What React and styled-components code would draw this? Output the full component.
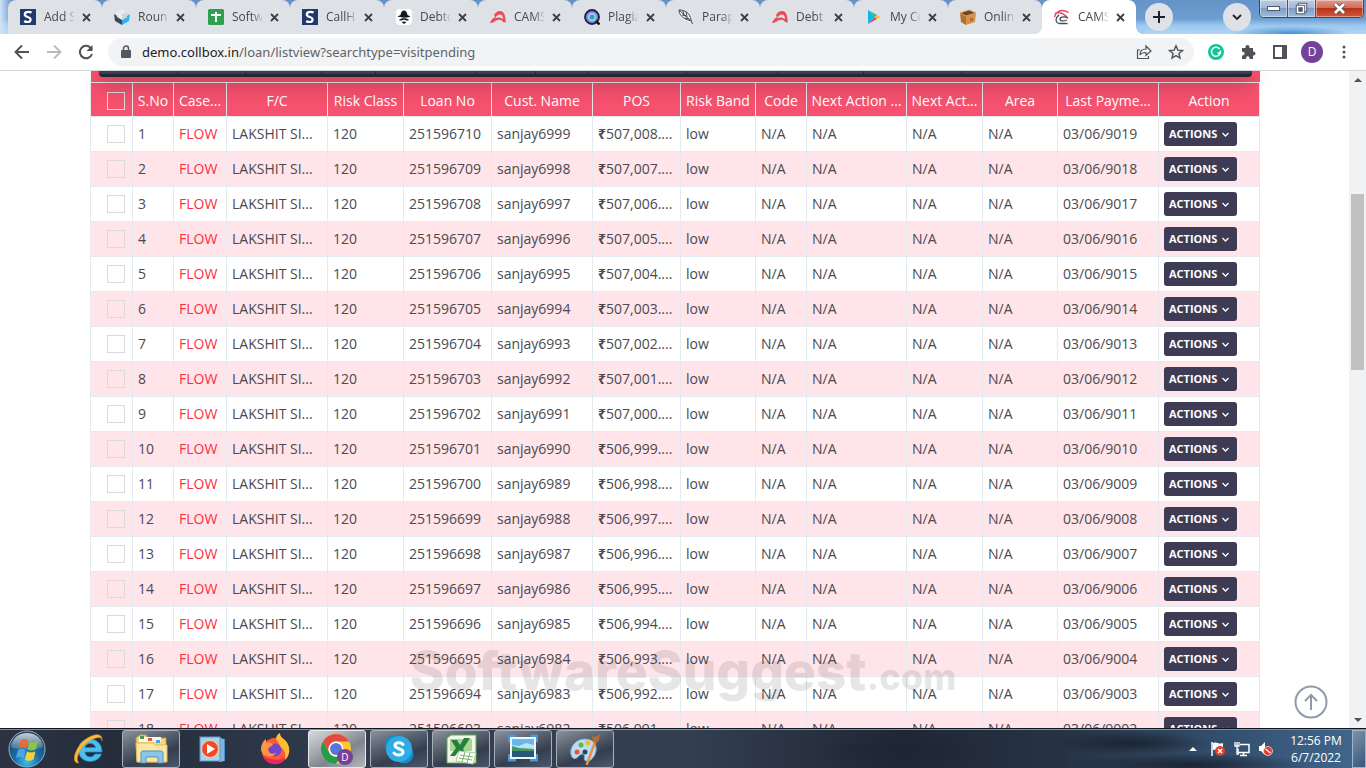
import React from 'react';
import styled, { createGlobalStyle, css } from 'styled-components';

const GlobalStyle = createGlobalStyle`
  *, *::before, *::after { box-sizing: border-box; }
  html, body { margin: 0; padding: 0; }
  body { font-family: "Open Sans", "Noto Sans", sans-serif; background: #fff; }
  button, input { font: inherit; margin: 0; padding: 0; }
`;

const Desktop = styled.div`
  display: flex;
  flex-direction: column;
  height: 100vh;
  overflow: hidden;
`;

/* ---------- Browser chrome ---------- */

const TabStrip = styled.header`
  display: flex;
  align-items: flex-start;
  height: 34px;
  flex: none;
  padding: 0 2px 0 8px;
  background:
    radial-gradient(ellipse 60px 8px at calc(100% - 76px) 100%, #3f8fd0 0, #3f8fd000 100%),
    linear-gradient(90deg, #cfe3f7 0, #cfe3f700 12px),
    linear-gradient(#6593c8 0, #6d9dd1 55%, #9cc8f0 75%, #b2d6f5 100%);
`;

const TabList = styled.nav`
  display: flex;
  flex: 0 1 1128px;
  min-width: 0;
`;

const TabBox = styled.div`
  position: relative;
  display: flex;
  align-items: center;
  flex: 1 1 94px;
  min-width: 0;
  height: 34px;
  padding: 0 11px 0 12px;
  border-radius: 8px 8px 0 0;
  background: #dee1e6;
  color: #45484d;
  ${({ $divider }) => $divider && css`
    &::after {
      content: '';
      position: absolute;
      right: -1px;
      top: 8px;
      width: 1px;
      height: 19px;
      background: #80868b;
    }
  `}
  ${({ $active }) => $active && css`
    background: #fff;
    &::before, &::after {
      content: '';
      position: absolute;
      bottom: 0;
      width: 8px;
      height: 8px;
    }
    &::before { left: -8px; background: radial-gradient(circle at 0 0, #dee1e6 8px, #fff 8px); }
    &::after { right: -8px; background: radial-gradient(circle at 100% 0, #a5cdf1 8px, #fff 8px); }
  `}
`;

const TabTitle = styled.a`
  flex: 1;
  min-width: 0;
  margin-left: 8px;
  overflow: hidden;
  white-space: nowrap;
  color: inherit;
  text-decoration: none;
  font-size: 12px;
  line-height: 18px;
  mask-image: linear-gradient(90deg, #000 65%, transparent 105%);
`;

const IconButton = styled.button`
  display: flex;
  align-items: center;
  justify-content: center;
  flex: none;
  width: ${({ $size }) => $size}px;
  height: ${({ $size }) => $size}px;
  border: 0;
  border-radius: 50%;
  color: #4f5358;
  background: ${({ $fill }) => $fill || 'transparent'};
`;

const TabClose = styled(IconButton)`
  margin-left: 8px;
  color: #3c4043;
`;

const StripButton = styled(IconButton)`
  margin: 3px 0 0 ${({ $gap }) => $gap || 0}px;
  color: #202124;
`;

const WindowControls = styled.div`
  display: flex;
  height: 18px;
  margin-left: 8px;
  border: 1px solid #33496b;
  border-top: 0;
  border-radius: 0 0 5px 5px;
  overflow: hidden;
`;

const WindowButton = styled.button`
  display: flex;
  align-items: center;
  justify-content: center;
  width: ${({ $close }) => ($close ? 47 : 28)}px;
  border: 0;
  border-right: ${({ $close }) => ($close ? '0' : '1px solid #3f5573')};
  box-shadow: inset 0 0 0 1px #ffffff66;
  background: ${({ $close }) =>
    $close
      ? 'linear-gradient(#dd9a8c 0, #cf6f5a 45%, #b8321a 50%, #d3583a 100%)'
      : 'linear-gradient(#bccde2 0, #a3b9d5 45%, #7f9cc2 50%, #a0bcdd 100%)'};
`;

const Spacer = styled.div`flex: 1;`;

const Toolbar = styled.div`
  display: flex;
  align-items: center;
  flex: none;
  height: 37px;
  padding: 0 10px 1px 10px;
  gap: 8px;
  border-bottom: 1px solid #d5d7da;
  background: #fff;
`;

const AddressBar = styled.form`
  display: flex;
  align-items: center;
  flex: 1;
  min-width: 0;
  height: 28px;
  margin: 0 2px;
  padding: 0 6px 0 12px;
  border-radius: 14px;
  background: #f1f3f4;
  gap: 8px;
`;

const Address = styled.div`
  flex: 1;
  min-width: 0;
  padding-left: 2px;
  font-family: "Noto Sans", "Open Sans", sans-serif;
  font-size: 13px;
  line-height: 20px;
  color: #5f6368;
  white-space: nowrap;
  overflow: hidden;
`;

const Host = styled.span`color: #202124;`;

const Avatar = styled.button`
  width: 22px;
  height: 22px;
  margin: 0 1px;
  border: 0;
  border-radius: 50%;
  background: #75429b;
  color: #fff;
  font-size: 12px;
  line-height: 22px;
`;

/* ---------- Page ---------- */

const Viewport = styled.div`
  position: relative;
  display: flex;
  flex: 1;
  min-height: 0;
  background: #fff;
`;

const Page = styled.main`
  flex: 1;
  min-width: 0;
  padding: 0 89px 0 90px;
  overflow: hidden;
`;

const StickyStrip = styled.div`
  height: 11px;
  margin-left: 1px;
  padding: 0 8px;
  background: #f6516e;
`;

const MenuBar = styled.div`
  position: relative;
  z-index: 1;
  display: flex;
  height: 6px;
  border-radius: 0 0 4px 4px;
  border-bottom: 3px solid #222736;
  background: #3e3b55;
  box-shadow: 0 5px 20px rgba(0, 0, 0, 0.5);
`;

const MenuSlot = styled.span`
  flex: ${({ $grow }) => $grow} 1 0;
  border-right: 1px solid #222736;
  &:last-child { border-right: 0; }
`;

const Grid = styled.table`
  width: 100%;
  table-layout: fixed;
  border-collapse: separate;
  border-spacing: 0;
  font-size: 14px;
  line-height: 20px;
  color: #4a4a50;
`;

const HeadCell = styled.th`
  height: 35px;
  padding: 2px 4px 0;
  border: 1px solid #e4e9ee;
  border-left-width: 0;
  background: #f6516e;
  color: #fff;
  font-weight: 500;
  text-align: ${({ $left }) => ($left ? 'left' : 'center')};
  white-space: nowrap;
  &:first-child { padding-left: 16px; border-left-width: 1px; }
`;

const Row = styled.tr`
  background: #fff;
  &:nth-child(even) { background: #ffe4e9; }
`;

const Cell = styled.td`
  height: 35px;
  padding: 0 0 0 5px;
  border: solid #e3eaf0;
  border-width: 0 1px 1px 0;
  white-space: nowrap;
  overflow: hidden;
  color: ${({ $alert }) => ($alert ? '#fb2f3d' : 'inherit')};
  &:first-child { padding-left: 16px; border-left-width: 1px; }
`;

const Rupee = styled.span`font-weight: 700;`;

const Tick = styled.input`
  display: block;
  appearance: none;
  width: 18px;
  height: 18px;
  border: 1px solid #d9dadc;
  background: transparent;
`;

const ActionsButton = styled.button`
  display: flex;
  align-items: center;
  justify-content: space-between;
  width: 73px;
  height: 24px;
  padding: 0 8px 0 5px;
  border: 0;
  border-radius: 3px;
  background: #3e3b55;
  color: #fff;
  font-size: 11px;
  font-weight: 700;
  line-height: 16px;
`;

const Watermark = styled.div`
  position: absolute;
  left: 0;
  right: 0;
  bottom: 21px;
  text-align: center;
  font-family: Inter, sans-serif;
  font-size: 53px;
  font-weight: 800;
  line-height: 60px;
  color: rgba(60, 60, 60, 0.13);
  pointer-events: none;
`;

const WatermarkSuffix = styled.span`font-size: 36px;`;

const BackToTop = styled.a`
  position: absolute;
  right: 38px;
  bottom: 9px;
  display: flex;
  color: #9299a8;
`;

const ScrollTrack = styled.div`
  display: flex;
  flex-direction: column;
  align-items: center;
  flex: none;
  width: 17px;
  background: #f1f2f3;
`;

const ScrollArrow = styled.button`
  display: flex;
  align-items: center;
  justify-content: center;
  width: 17px;
  height: 17px;
  border: 0;
  background: transparent;
`;

const ScrollLane = styled.div`
  display: flex;
  flex-direction: column;
  flex: 1;
  width: 13px;
`;

const ScrollGap = styled.div`flex: ${({ $grow }) => $grow};`;
const ScrollThumb = styled.div`
  flex: 176;
  background: #c1c1c1;
`;

/* ---------- Taskbar ---------- */

const Taskbar = styled.footer`
  display: flex;
  align-items: center;
  flex: none;
  height: 40px;
  border-top: 1px solid #10151f;
  box-shadow: inset 0 1px 0 #8090a4;
  background:
    radial-gradient(ellipse 90px 14px at 900px 22px, #1f2633 0, #1f263300 100%),
    radial-gradient(ellipse 80px 12px at 1130px 14px, #1b2432 0, #1b243200 100%),
    radial-gradient(ellipse 120px 12px at 1190px 36px, #1b2432 0, #1b243200 100%),
    linear-gradient(90deg, #2c3443 0, #252d3b 8%, #333f52 30%, #343f51 50%, #1f2734 66%, #273345 78%, #33506f 90%, #41688f 100%);
`;

const StartButton = styled.button`
  display: flex;
  margin: 0 14px 0 8px;
  border: 0;
  background: transparent;
`;

const TaskList = styled.nav`
  display: flex;
  gap: 4px;
`;

const TaskButton = styled.button`
  display: flex;
  align-items: center;
  justify-content: center;
  width: 58px;
  height: 38px;
  border: 1px solid transparent;
  border-radius: 3px;
  background: transparent;
  ${({ $open }) => $open && css`
    border-color: #a9afb9;
    background: linear-gradient(160deg, #8b929e 0, #596270 35%, #343e4f 65%, #4c586b 100%);
  `}
  ${({ $current }) => $current && css`
    border-color: #e8eaec;
    background: linear-gradient(150deg, #d7d9dc 0, #a7abb1 35%, #7f858e 60%, #b4b8bd 100%);
  `}
`;

const Tray = styled.div`
  display: flex;
  align-items: center;
  gap: 8px;
`;

const Clock = styled.time`
  width: 68px;
  padding-top: 1px;
  color: #fff;
  font-size: 12px;
  line-height: 17px;
  text-align: center;
  white-space: nowrap;
`;

const ShowDesktop = styled.button`
  width: 14px;
  height: 38px;
  margin-left: -6px;
  border: 1px solid #9fb4c9;
  background: linear-gradient(135deg, #7d93ab, #38577a);
`;

/* ---------- Icons ---------- */

const Svg = ({ s = 16, w, h, box, children, ...rest }) => (
  <svg width={w || s} height={h || s} viewBox={box || `0 0 ${w || s} ${h || s}`} fill="none" aria-hidden="true" {...rest}>
    {children}
  </svg>
);

const FavS = () => (
  <Svg>
    <rect width="16" height="16" fill="#223a6b" />
    <path d="M11.6 3.6C10.6 3 9.3 2.7 8 2.8c-2 0-3.2 1.1-3.2 2.6 0 3.2 5.8 2 5.8 5 0 1.6-1.4 2.6-3.1 2.6-1.200 0-2.500-.4-3.300-1" stroke="#fff" strokeWidth="2.200" />
  </Svg>
);
const FavCube = () => (
  <Svg>
    <path d="M0 5l8 5v6l-7-4z" fill="#3b4856" />
    <path d="M16 5l-8 5v6l7-4z" fill="#29b6f6" />
    <path d="M3 3l5-3 5 3v5L8 11 3 8z" fill="#e9ebee" />
    <path d="M8 5l5-2v5l-5 3z" fill="#cfd3d8" />
  </Svg>
);
const FavSheet = () => (
  <Svg>
    <rect width="16" height="16" rx="1.500" fill="#2e9e50" />
    <path d="M3 6h10M8 3v10" stroke="#fff" strokeWidth="2" />
  </Svg>
);
const FavSpy = () => (
  <Svg>
    <rect width="16" height="16" rx="4" fill="#fff" />
    <path d="M4.500 6C5 3 6.200 1.500 8 1.500S11 3 11.500 6l3 1.500c-3 1.600-10 1.600-13 0z" fill="#15181c" />
    <path d="M3 11c2-2.500 8-2.500 10 0-1.500.8-3 .8-5-.4C6 11.800 4.500 11.800 3 11zM5.500 13c2-.8 3-.8 5 0L8 15z" fill="#15181c" />
  </Svg>
);
const FavArch = () => (
  <Svg>
    <path d="M0 14C1 11 3 9 5 8L4 6C6 2.500 8 2 10 2c4 0 5.500 4 5.800 11.500L13 13c-1-2-3-2.500-5.500-2C5 11.500 4 14 0 14zM5 9.500c3-1.500 5.500-1.300 8 .8 0-3.300-1-4.800-3-4.800S6.500 6.500 5 9.500z" fill="#ee4a58" fillRule="evenodd" />
  </Svg>
);
const FavPlag = () => (
  <Svg>
    <circle cx="8" cy="8" r="7" fill="#7a83e8" stroke="#1f2340" strokeWidth="1.800" />
    <circle cx="8" cy="8" r="4.200" fill="#b9c3ff" />
    <circle cx="8" cy="8" r="2.500" fill="#17b890" />
    <path d="M12 12l3.500 3.500" stroke="#111" strokeWidth="2.500" />
  </Svg>
);
const FavQuill = () => (
  <Svg>
    <path d="M1 1c6 0 11 3 12 10l1.500 4C12 13 10 13 8 12 3 10 1 6 1 1z" fill="#f3f4f5" />
    <path d="M1 1c6 0 11 3 12 10l1.500 4M1 1c0 5 4 9 12 11M1 1l11 10M5 2l1 4M8 3l1 5M4 6l4 1M7 9l4 1" stroke="#34373b" strokeWidth=".900" />
  </Svg>
);
const FavPlay = () => (
  <Svg>
    <path d="M2 1v14l7-7z" fill="#12b5e8" />
    <path d="M2 1l9 5-2 2z" fill="#17c2a0" />
    <path d="M2 15l9-5-2-2z" fill="#ee3e4b" />
    <path d="M11 6l4 2-4 2-2-2z" fill="#fcc31e" />
  </Svg>
);
const FavBox = () => (
  <Svg>
    <path d="M0 4l6 3v9l-5-3z" fill="#b5702f" />
    <path d="M6 7l10-3-1 9-9 3z" fill="#d3934f" />
    <path d="M0 4l9-3 7 3-10 3z" fill="#6e4520" />
    <path d="M0 4l9-3 7 3-10 3z" stroke="#d9a05e" />
    <path d="M10 9.500l3-1v3l-3 1z" fill="#a76a30" />
  </Svg>
);
const FavCams = () => (
  <Svg>
    <path d="M.5 8C2 2 8-.5 14.500 3.500M1 4.500c5-2 9 0 13 5" stroke="#e2485a" strokeWidth="1.400" />
    <path d="M5 6C1 9 1 14 6 14.500h7.500M13.500 8.500C9 7 5.500 8.500 6 10.500s4 1.500 7 .5" stroke="#454c59" strokeWidth="1.300" />
  </Svg>
);

const Cross = () => (
  <Svg s={9}><path d="M1 1l7 7M8 1L1 8" stroke="currentColor" strokeWidth="1.800" /></Svg>
);

const ActionChevron = () => (
  <Svg s={7}><path d="M.5 2l3 3 3-3" stroke="#fff" strokeWidth="1.300" /></Svg>
);

const StartOrb = () => (
  <Svg s={38}>
    <defs>
      <radialGradient id="orb" cx=".5" cy=".85" r=".8">
        <stop offset="0" stopColor="#35c3ee" /><stop offset=".45" stopColor="#1c6aa5" /><stop offset="1" stopColor="#23405f" />
      </radialGradient>
      <linearGradient id="orbShine" x2="0" y2="1">
        <stop offset="0" stopColor="#fff" stopOpacity=".75" /><stop offset="1" stopColor="#fff" stopOpacity=".12" />
      </linearGradient>
    </defs>
    <circle cx="19" cy="19" r="18" fill="url(#orb)" stroke="#8fb3cc" />
    <path d="M3 17C4 7 12 3 19 3s15 4 16 14c-8 4-24 4-32 0z" fill="url(#orbShine)" />
    <path d="M13 10c3-1.500 5-1.500 7 .5l-2 8c-2.500-2-5-2-7.500-.5z" fill="#ee6a35" />
    <path d="M21.500 11.500c3 1.500 5.500 1.500 8.500-.5l-2 8c-3 2-6 2-8.500.3z" fill="#8cc63f" />
    <path d="M10 20c3-1.500 5-1.500 7.500.3l-2 8c-2.500-2-5-2-7.500-.3z" fill="#4ea6e6" />
    <path d="M19 21.500c3 1.500 5.500 1.500 8.500-.3l-2 8c-3 2-6 2-8.500.3z" fill="#fbd13b" />
  </Svg>
);

const IeIcon = () => (
  <Svg s={32}>
    <path d="M29 19H12c0 5 7 7 10 2h6.500c-4 11-23 10-23-4C5.500 2 29 2 29 19zM12 14.500h10.500c-1-5.500-9.500-5.500-10.500 0z" fill="#4dbdee" stroke="#1f85c4" strokeWidth=".800" fillRule="evenodd" />
    <path d="M6 30C-3 31 2 14 13 6 20 1 30-1 29 8c0-5-5-4-11-1C8 12 1 26 6 30z" fill="#f8bb3c" stroke="#d9902a" strokeWidth=".500" />
  </Svg>
);
const FolderIcon = () => (
  <Svg s={34}>
    <path d="M2 6l4-3h6l2 3h18v24H3z" fill="#f4d681" stroke="#c39c3c" />
    <path d="M5 5h22v5H5z" fill="#fff8dd" />
    <path d="M6 4h4v3H6z" fill="#3f9b54" /><path d="M14 6h4v3h-4z" fill="#e05a3d" /><path d="M22 8h4v3h-4z" fill="#4aa3dd" />
    <path d="M2 11h17l2 2h12v17H3z" fill="#fae7a3" stroke="#e0bb5c" />
    <path d="M7 31V21q0-2 2-2h18q2 0 2 2v10h-5v-6H12v6z" fill="#8bc5ea" stroke="#4f94c8" />
  </Svg>
);
const WmpIcon = () => (
  <Svg s={28}>
    <path d="M20 3l6 1v22l-6 1z" fill="#4d8fc4" /><path d="M22 3v24M24 4v22" stroke="#b7dbf3" />
    <rect x="1" y="2" width="20" height="24" fill="#a9d2ef" stroke="#5c97c4" />
    <circle cx="11" cy="14" r="8.500" fill="#ee4b25" stroke="#ffd0b8" />
    <path d="M8 9l8 5-8 5z" fill="#fff" />
  </Svg>
);
const FirefoxIcon = () => (
  <Svg s={32}>
    <circle cx="16" cy="18" r="13" fill="#ff5a36" />
    <path d="M4 23c4 11 20 10 24 0-4 5-15 5-24 0z" fill="#ee2360" />
    <path d="M17 5c1-3 2-4 4-5 0 4 3 5 6 8 5 6 4 15-1 19 1-5 0-11-5-13 0-4-3-5-4-9z" fill="#ffbd35" />
    <circle cx="16" cy="17" r="6.500" fill="#7446cf" />
    <path d="M2 17C2 12 4 8 7 6v4c3-1 5 0 7 1-1 3-4 2-5 5 0 4 4 6 8 4-2 5-13 5-15-3z" fill="#ff9640" />
  </Svg>
);
const ChromeIcon = () => (
  <Svg s={34}>
    <circle cx="16" cy="17" r="15" fill="#fbc934" />
    <path d="M3 9.500A15 15 0 0 1 29 9.500H16A7.500 7.500 0 0 0 9.500 21z" fill="#e34b42" />
    <path d="M3 9.500A15 15 0 0 0 16 32l6.500-11A7.500 7.500 0 0 1 9.500 21z" fill="#269b4b" />
    <circle cx="16" cy="17" r="7.500" fill="#fff" /><circle cx="16" cy="17" r="6" fill="#5576dd" />
    <circle cx="25" cy="25" r="8" fill="#7c3f98" />
    <text x="25" y="29" fontSize="10" fill="#fff" textAnchor="middle">D</text>
  </Svg>
);
const SkypeIcon = () => (
  <Svg s={32}>
    <circle cx="12" cy="12" r="10" fill="#168ccb" /><circle cx="21" cy="21" r="9.500" fill="#168ccb" />
    <circle cx="16" cy="16" r="13" fill="#2eace4" />
    <path d="M20 11.500c-2-2.500-8-2.500-8 1s8 3 8 6.500-7 4-9 1" stroke="#fff" strokeWidth="3" strokeLinecap="round" />
  </Svg>
);
const ExcelIcon = () => (
  <Svg s={32}>
    <path d="M2 5l4-3h25v28H2z" fill="#edf6e8" stroke="#5fa951" />
    <path d="M5 6h22v12H5z" fill="#a9d592" />
    <path d="M6 7h6l3 5 4-7h6l-7 11 5 8h-6l-4-5-3 4H5l6-8z" fill="#24803c" />
    <path d="M14 18l17 2-3 11-17-3z" fill="#fff" stroke="#aacda1" />
    <path d="M15 22l13 2M14 25l13 2M20 19l-3 10M25 20l-3 10" stroke="#79b66d" />
  </Svg>
);
const PictureIcon = () => (
  <Svg s={30}>
    <path d="M1 8V2h7M22 2h7v6M1 20v6h7M22 26h7v-6" stroke="#4796d8" strokeWidth="3" />
    <path d="M3 4h24v20H3z" fill="#bfe1f7" stroke="#eff5fa" strokeWidth="2" />
    <path d="M4 5h22v6l-8-2-7 3-7-1z" fill="#68b7eb" />
    <path d="M4 12l7 2 15 1v3H4z" fill="#479666" /><path d="M4 17h22v6H4z" fill="#27577b" />
  </Svg>
);
const PaintIcon = () => (
  <Svg s={32}>
    <path d="M3 24C-1 17 5 6 16 6c8 0 12 5 11 12-1 5-5 11-10 10-4-1 1-7-4-7-3 0-6 8-10 3z" fill="#bcdcf1" stroke="#77a9cf" />
    <circle cx="8" cy="19" r="2.500" fill="#e65448" /><circle cx="12" cy="12" r="2.500" fill="#69b344" /><circle cx="19" cy="10" r="2.500" fill="#f2b928" /><circle cx="16" cy="19" r="2.500" fill="#244769" />
    <path d="M18 31L26 9" stroke="#e89244" strokeWidth="2.500" strokeLinecap="round" />
    <path d="M24 9l-1-6 3 1 5-3-1 6-3 3z" fill="#b66b37" />
  </Svg>
);
const FlagIcon = () => (
  <Svg>
    <path d="M2 1v14" stroke="#fff" strokeWidth="1.500" /><path d="M3 2c4-2 5 2 10 0v7c-5 2-6-1-10 0z" fill="#fff" />
    <circle cx="10" cy="10" r="5" fill="#df3f2c" /><path d="M8 8l4 4M12 8l-4 4" stroke="#fff" strokeWidth="1.500" />
  </Svg>
);
const NetworkIcon = () => (
  <Svg>
    <path d="M6 3.500h9v8H4v-4M9.500 11.500v3M6 14.500h7" stroke="#fff" strokeWidth="1.500" />
    <path d="M1 1v4h4V1M3 1v12h2" stroke="#fff" strokeWidth="1.300" />
  </Svg>
);
const VolumeIcon = () => (
  <Svg>
    <path d="M1 5h2l4-4v13l-4-4H1z" fill="#fff" />
    <circle cx="10" cy="10" r="4.500" fill="#df3f2c" stroke="#f8d7d1" strokeWidth=".800" /><path d="M7.500 8l5 4" stroke="#fff" strokeWidth="1.500" />
  </Svg>
);

/* ---------- Data ---------- */

const tabs = [
  ['Add S', FavS], ['Roun', FavCube], ['Softw', FavSheet], ['CallHi', FavS], ['Debto', FavSpy], ['CAMS', FavArch],
  ['Plagia', FavPlag], ['Parap', FavQuill], ['Debt C', FavArch], ['My Co', FavPlay], ['Onlin', FavBox], ['CAMS', FavCams],
];

const columns = [
  ['S.No', 41], ['Case...', 53], ['F/C', 101], ['Risk Class', 76], ['Loan No', 88], ['Cust. Name', 101], ['POS', 88],
  ['Risk Band', 75], ['Code', 51], ['Next Action ...', 100], ['Next Act...', 76], ['Area', 75], ['Last Payme...', 101], ['Action', 101],
];

const menuSlots = [79, 67, 76, 53, 101, 59, 51, 99, 91, 86, 97, 293];

const loans = Array.from({ length: 18 }, (_, i) => ({
  no: i + 1,
  loan: 251596710 - i,
  name: `sanjay${6999 - i}`,
  pos: `${(507008 - i).toLocaleString('en-US')}....`,
  paid: `03/06/${9019 - i}`,
}));

const tasks = [
  ['Internet Explorer', IeIcon], ['File Explorer', FolderIcon, 'open'], ['Media Player', WmpIcon], ['Firefox', FirefoxIcon],
  ['Chrome', ChromeIcon, 'current'], ['Skype', SkypeIcon, 'open'], ['Excel', ExcelIcon, 'open'],
  ['Picture Viewer', PictureIcon, 'open'], ['Paint', PaintIcon, 'open'],
];

/* ---------- Sections ---------- */

function BrowserTabs() {
  return (
    <TabStrip>
      <TabList aria-label="Tabs">
        {tabs.map(([title, Icon], i) => (
          <TabBox key={i} $active={i === tabs.length - 1} $divider={i < tabs.length - 2}>
            <Icon />
            <TabTitle href="#tab">{title}</TabTitle>
            <TabClose $size={9} aria-label="Close tab"><Cross /></TabClose>
          </TabBox>
        ))}
      </TabList>
      <StripButton $size={28} $gap={9} $fill="#dee1e6" aria-label="New tab">
        <Svg s={12}><path d="M6 0v12M0 6h12" stroke="currentColor" strokeWidth="2" /></Svg>
      </StripButton>
      <Spacer />
      <StripButton $size={28} $fill="#dee1e6" aria-label="Search tabs">
        <Svg s={10}><path d="M1 3l4 4 4-4" stroke="currentColor" strokeWidth="1.800" /></Svg>
      </StripButton>
      <WindowControls>
        <WindowButton aria-label="Minimize">
          <Svg w={13} h={5}><rect x=".5" y=".5" width="12" height="4" fill="#fff" stroke="#4d5b70" /></Svg>
        </WindowButton>
        <WindowButton aria-label="Restore">
          <Svg s={13}>
            <path d="M4.500 2.500h6v6h-6z" stroke="#4d5b70" strokeWidth="3.500" /><path d="M4.500 2.500h6v6h-6z" stroke="#fff" strokeWidth="1.500" />
            <path d="M2.500 4.500h6v6h-6z" fill="#4d5b70" stroke="#4d5b70" strokeWidth="3.500" /><path d="M2.500 4.500h6v6h-6z" stroke="#fff" strokeWidth="1.500" />
          </Svg>
        </WindowButton>
        <WindowButton $close aria-label="Close">
          <Svg w={13} h={11}>
            <path d="M2 1l9 9M11 1l-9 9" stroke="#57454b" strokeWidth="4.500" /><path d="M2 1l9 9M11 1l-9 9" stroke="#fff" strokeWidth="2.800" />
          </Svg>
        </WindowButton>
      </WindowControls>
    </TabStrip>
  );
}

function BrowserToolbar() {
  return (
    <Toolbar>
      <IconButton $size={24} aria-label="Back">
        <Svg><path d="M15 8H2M8 1.500L1.500 8 8 14.500" stroke="currentColor" strokeWidth="1.900" /></Svg>
      </IconButton>
      <IconButton $size={24} aria-label="Forward">
        <Svg><path d="M1 8h13M8 1.500L14.500 8 8 14.500" stroke="#b9bbc2" strokeWidth="1.900" /></Svg>
      </IconButton>
      <IconButton $size={24} aria-label="Reload">
        <Svg><path d="M14 10A6.200 6.200 0 1 1 12.500 3.600L14 5" stroke="currentColor" strokeWidth="2" /><path d="M14.500 1v6h-6z" fill="currentColor" /></Svg>
      </IconButton>
      <AddressBar>
        <Svg w={12} h={14}><rect x="1" y="5" width="10" height="8" rx="1" fill="#54585e" /><path d="M3.500 5V3.500a2.500 2.500 0 0 1 5 0V5" stroke="#54585e" strokeWidth="1.500" /></Svg>
        <Address><Host>demo.collbox.in</Host>/loan/listview?searchtype=visitpending</Address>
        <IconButton $size={24} type="button" aria-label="Share">
          <Svg><path d="M4 6H1.500v8.500h11V12M4 11c0-4 2-6 6-6V2l5 5-5 4.500V8.500C7 8.500 5 9 4 11z" stroke="currentColor" strokeWidth="1.200" /></Svg>
        </IconButton>
        <IconButton $size={24} type="button" aria-label="Bookmark">
          <Svg><path d="M8 1.800l1.800 4.300 4.700.4-3.600 3 1.100 4.600L8 11.600l-4 2.500 1.100-4.600-3.600-3 4.700-.4z" stroke="currentColor" strokeWidth="1.400" /></Svg>
        </IconButton>
      </AddressBar>
      <IconButton $size={24} aria-label="Writing assistant">
        <Svg><circle cx="8" cy="8" r="8" fill="#15c39a" /><path d="M11.500 5A4.500 4.500 0 1 0 12.300 9H9.500M12.500 6.500V9.500" stroke="#fff" strokeWidth="1.400" /></Svg>
      </IconButton>
      <IconButton $size={24} aria-label="Extensions">
        <Svg><path d="M2 4h3.500V3a2 2 0 0 1 4 0v1H13v3.500h.5a2 2 0 0 1 0 4H13V15H9.500v-1a1.700 1.700 0 0 0-3.400 0v1H2v-3.600h.8a1.800 1.800 0 0 0 0-3.600H2z" fill="currentColor" /></Svg>
      </IconButton>
      <IconButton $size={24} aria-label="Side panel">
        <Svg s={14}><path d="M1 1h12v12H1z" stroke="currentColor" strokeWidth="2" /><path d="M9 1h4v12H9z" fill="currentColor" /></Svg>
      </IconButton>
      <Avatar aria-label="Profile">D</Avatar>
      <IconButton $size={24} aria-label="Menu">
        <Svg><circle cx="8" cy="3" r="1.500" fill="currentColor" /><circle cx="8" cy="8" r="1.500" fill="currentColor" /><circle cx="8" cy="13" r="1.500" fill="currentColor" /></Svg>
      </IconButton>
    </Toolbar>
  );
}

function LoanRow({ row }) {
  return (
    <Row>
      <Cell><Tick type="checkbox" aria-label={`Select ${row.no}`} /></Cell>
      <Cell>{row.no}</Cell>
      <Cell $alert>FLOW</Cell>
      <Cell>LAKSHIT SI...</Cell>
      <Cell>120</Cell>
      <Cell>{row.loan}</Cell>
      <Cell>{row.name}</Cell>
      <Cell><Rupee>₹</Rupee>{row.pos}</Cell>
      <Cell>low</Cell>
      <Cell>N/A</Cell>
      <Cell>N/A</Cell>
      <Cell>N/A</Cell>
      <Cell>N/A</Cell>
      <Cell>{row.paid}</Cell>
      <Cell><ActionsButton>ACTIONS<ActionChevron /></ActionsButton></Cell>
    </Row>
  );
}

function LoanPage() {
  return (
    <Viewport>
      <Page>
        <StickyStrip>
          <MenuBar>{menuSlots.map((grow, i) => <MenuSlot key={i} $grow={grow} />)}</MenuBar>
        </StickyStrip>
        <Grid>
          <colgroup>
            <col width={43} />
            {columns.map(([name, width]) => <col key={name} width={width} />)}
          </colgroup>
          <thead>
            <tr>
              <HeadCell $left><Tick type="checkbox" aria-label="Select all" /></HeadCell>
              {columns.map(([name]) => <HeadCell key={name}>{name}</HeadCell>)}
            </tr>
          </thead>
          <tbody>{loans.map((row) => <LoanRow key={row.no} row={row} />)}</tbody>
        </Grid>
      </Page>
      <ScrollTrack>
        <ScrollArrow aria-label="Scroll up"><Svg w={8} h={4}><path d="M0 4l4-4 4 4z" fill="#50535a" /></Svg></ScrollArrow>
        <ScrollLane>
          <ScrollGap $grow={106} />
          <ScrollThumb />
          <ScrollGap $grow={341} />
        </ScrollLane>
        <ScrollArrow aria-label="Scroll down"><Svg w={8} h={4}><path d="M0 0l4 4 4-4z" fill="#50535a" /></Svg></ScrollArrow>
      </ScrollTrack>
      <Watermark>SoftwareSuggest<WatermarkSuffix>.com</WatermarkSuffix></Watermark>
      <BackToTop href="#top" aria-label="Back to top">
        <Svg s={34}><circle cx="17" cy="17" r="15.500" stroke="currentColor" strokeWidth="2" /><path d="M17 25V10M11 16l6-6 6 6" stroke="currentColor" strokeWidth="2" /></Svg>
      </BackToTop>
    </Viewport>
  );
}

const TrayArrow = styled(IconButton)`margin-right: 1px;`;

function SystemTaskbar() {
  return (
    <Taskbar>
      <StartButton aria-label="Start"><StartOrb /></StartButton>
      <TaskList aria-label="Applications">
        {tasks.map(([name, Icon, state]) => (
          <TaskButton key={name} aria-label={name} $open={state === 'open'} $current={state === 'current'}><Icon /></TaskButton>
        ))}
      </TaskList>
      <Spacer />
      <Tray>
        <TrayArrow $size={16} aria-label="Show hidden icons">
          <Svg w={8} h={4}><path d="M0 4l4-4 4 4z" fill="#fff" /></Svg>
        </TrayArrow>
        <FlagIcon />
        <NetworkIcon />
        <VolumeIcon />
        <Clock>12:56 PM<br />6/7/2022</Clock>
        <ShowDesktop aria-label="Show desktop" />
      </Tray>
    </Taskbar>
  );
}

export default function App() {
  return (
    <>
      <GlobalStyle />
      <Desktop>
        <BrowserTabs />
        <BrowserToolbar />
        <LoanPage />
        <SystemTaskbar />
      </Desktop>
    </>
  );
}
